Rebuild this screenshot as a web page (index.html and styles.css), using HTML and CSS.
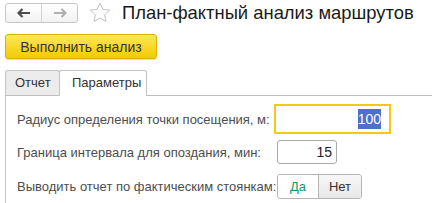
FILE: index.html
```html
<!DOCTYPE html>
<html lang="ru">
<head>
    <meta charset="UTF-8">
    <title>План-фактный анализ маршрутов</title>
    <link rel="stylesheet" href="styles.css">
</head>
<body>

<div class="header">
    <div class="nav">
        <div class="nav-btn">
            <svg width="14" height="10" viewBox="0 0 14 10"><path d="M1 5h12M5.5 1L1.5 5l4 4" stroke="#4d4d4d" stroke-width="2.2" fill="none"/></svg>
        </div>
        <div class="nav-btn">
            <svg width="14" height="10" viewBox="0 0 14 10"><path d="M1 5h12M8.5 1l4 4-4 4" stroke="#b0b0b0" stroke-width="2.2" fill="none"/></svg>
        </div>
    </div>
    <svg class="star" width="22" height="21" viewBox="0 0 22 21">
        <path d="M11 1.2l2.9 6.2 6.7.7-5 4.6 1.4 6.7L11 16l-6 3.4 1.4-6.7-5-4.6 6.7-.7z" fill="none" stroke="#c2c2c2" stroke-width="1"/>
    </svg>
    <h1 class="title">План-фактный анализ маршрутов</h1>
</div>

<div class="toolbar">
    <button class="run-btn">Выполнить анализ</button>
</div>

<div class="tabs">
    <div class="tab">Отчет</div>
    <div class="tab active">Параметры</div>
</div>

<div class="panel">
    <div class="row">
        <span class="label">Радиус определения точки посещения, м:</span>
        <div class="field wide focused"><span class="selected">100</span></div>
    </div>
    <div class="row">
        <span class="label">Граница интервала для опоздания, мин:</span>
        <div class="field narrow">15</div>
    </div>
    <div class="row">
        <span class="label">Выводить отчет по фактическим стоянкам:</span>
        <div class="toggle">
            <span class="opt on">Да</span>
            <span class="opt off">Нет</span>
        </div>
    </div>
</div>

</body>
</html>
```

FILE: styles.css
```css
body {
    margin: 0;
    font-family: "Liberation Sans", Arial, sans-serif;
    background-color: #fff;
    color: #4d4d4d;
    overflow: hidden;
}
.header {
    display: flex;
    align-items: center;
    padding: 2px 0 0 5px;
}
.nav {
    display: flex;
    width: 73px;
    height: 20px;
    border: 1px solid #c6c6c6;
    border-radius: 3px;
    box-sizing: border-box;
    background: linear-gradient(#fff, #f2f2f2);
}
.nav-btn {
    flex: 1;
    display: flex;
    align-items: center;
    justify-content: center;
}
.nav-btn + .nav-btn {
    border-left: 1px solid #d4d4d4;
}
.star {
    margin-left: 11px;
}
.title {
    margin: 0 0 0 11px;
    font-size: 18.4px;
    font-weight: normal;
    color: #1a1a1a;
    line-height: 21px;
}
.toolbar {
    margin-top: 11px;
    padding-left: 5px;
}
.run-btn {
    width: 152px;
    height: 25px;
    padding: 0;
    font-family: inherit;
    font-size: 14px;
    color: #333;
    background: linear-gradient(#fde75a, #f2cb00);
    border: 1px solid #d7b300;
    border-radius: 3px;
    box-shadow: 0 1px 1px rgba(0, 0, 0, 0.15);
}
.tabs {
    display: flex;
    margin-top: 11px;
    padding-left: 5px;
}
.tab {
    height: 25px;
    box-sizing: border-box;
    padding: 0 10px;
    line-height: 24px;
    font-size: 13px;
    color: #333;
    border: 1px solid #c4c4c4;
    border-bottom: none;
    border-radius: 3px 3px 0 0;
    background-color: #ececec;
}
.tab:first-child {
    width: 55px;
    padding: 0 0 0 9px;
}
.tab.active {
    width: 88px;
    padding-left: 12px;
    margin-left: -1px;
    background-color: #fff;
    position: relative;
    margin-bottom: -1px;
    height: 26px;
}
.panel {
    margin-left: 5px;
    border-top: 1px solid #bdbdbd;
    border-left: 1px solid #c4c4c4;
    padding: 11px 0 4px 11px;
    display: grid;
    row-gap: 9px;
}
.row {
    display: flex;
    align-items: center;
    height: 24px;
}
.row:last-child {
    height: 25px;
    margin-top: 1px;
}
.label {
    width: 260px;
    font-size: 13px;
    color: #4d4d4d;
}
.field {
    height: 24px;
    box-sizing: border-box;
    border: 1px solid #a9a9a9;
    border-radius: 3px;
    padding-right: 4px;
    text-align: right;
    font-size: 14px;
    line-height: 22px;
    color: #222;
}
.field.wide {
    width: 111px;
}
.field.narrow {
    width: 60px;
}
.field.focused {
    border-color: #fff;
    outline: 2px solid #f7c813;
    outline-offset: 1px;
    border-radius: 0;
    padding-right: 6px;
}
.selected {
    background-color: #4e6fcb;
    color: #fff;
    padding: 2px 0;
}
.toggle {
    display: flex;
    width: 85px;
    height: 25px;
    box-sizing: border-box;
    border: 1px solid #b5b5b5;
    border-radius: 3px;
    overflow: hidden;
    font-size: 13px;
    line-height: 23px;
}
.opt {
    text-align: center;
}
.opt.on {
    width: 40px;
    color: #0b9a6a;
    background-color: #fff;
    border-right: 1px solid #b5b5b5;
}
.opt.off {
    flex: 1;
    color: #333;
    background: linear-gradient(#f7f7f7, #e8e8e8);
}
```
